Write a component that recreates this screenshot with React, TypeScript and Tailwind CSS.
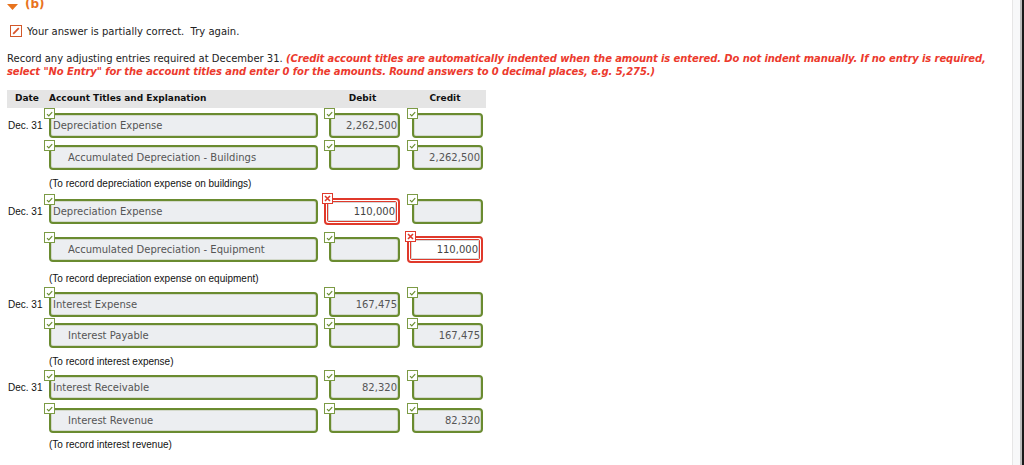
import React from 'react'

type Cell = { value?: string; bad?: boolean }
type Line = { account: string; credit?: boolean; debit: Cell; cr: Cell }
type Entry = { lines: [Line, Line]; note: string; gap: string; noteGap: string; after: string }

const entries: Entry[] = [
  {
    lines: [
      { account: 'Depreciation Expense', debit: { value: '2,262,500' }, cr: {} },
      { account: 'Accumulated Depreciation - Buildings', credit: true, debit: {}, cr: { value: '2,262,500' } },
    ],
    note: '(To record depreciation expense on buildings)',
    gap: 'mt-[7px]',
    noteGap: 'mt-[7px]',
    after: 'mb-[7px]',
  },
  {
    lines: [
      { account: 'Depreciation Expense', debit: { value: '110,000', bad: true }, cr: {} },
      { account: 'Accumulated Depreciation - Equipment', credit: true, debit: {}, cr: { value: '110,000', bad: true } },
    ],
    note: '(To record depreciation expense on equipment)',
    gap: 'mt-[11px]',
    noteGap: 'mt-[9px]',
    after: 'mb-[6px]',
  },
  {
    lines: [
      { account: 'Interest Expense', debit: { value: '167,475' }, cr: {} },
      { account: 'Interest Payable', credit: true, debit: {}, cr: { value: '167,475' } },
    ],
    note: '(To record interest expense)',
    gap: 'mt-[6px]',
    noteGap: 'mt-[7px]',
    after: 'mb-[6px]',
  },
  {
    lines: [
      { account: 'Interest Receivable', debit: { value: '82,320' }, cr: {} },
      { account: 'Interest Revenue', credit: true, debit: {}, cr: { value: '82,320' } },
    ],
    note: '(To record interest revenue)',
    gap: 'mt-[8px]',
    noteGap: 'mt-[5px]',
    after: 'mb-0',
  },
]

function Badge({ bad }: { bad?: boolean }) {
  if (bad) {
    return (
      <span className="absolute -left-[4px] -top-[7px] z-10 flex h-[11px] w-[11px] items-center justify-center border border-[#e0392b] bg-white">
        <svg width="7" height="7" viewBox="0 0 7 7">
          <path d="M1 1 L6 6 M6 1 L1 6" stroke="#e0392b" strokeWidth="1.6" />
        </svg>
      </span>
    )
  }
  return (
    <span className="absolute -left-[7px] -top-[7px] z-10 flex h-[11px] w-[11px] items-center justify-center border border-[#7c9b45] bg-white">
      <svg width="7" height="6" viewBox="0 0 7 6">
        <path d="M1 3.2 L2.8 5 L6.2 1.2" stroke="#6b8e32" strokeWidth="1.2" fill="none" />
      </svg>
    </span>
  )
}

function GreenBox({ children, className }: { children?: React.ReactNode; className: string }) {
  return (
    <div
      className={`relative flex h-[25px] items-center rounded-[4px] border-2 border-[#6a8b30] bg-[#eceef1] text-[#555] shadow-[inset_0_0_0_1px_#d3d9cb] ${className}`}
    >
      <Badge />
      {children}
    </div>
  )
}

function Amount({ cell, col }: { cell: Cell; col: 'debit' | 'credit' }) {
  const margin = col === 'debit' ? 'ml-[11px]' : 'ml-[12px]'
  if (cell.bad) {
    return (
      <div className={`relative h-[27px] w-[76px] rounded-[4px] border-2 border-[#e0392b] bg-white p-px ${col === 'debit' ? 'ml-[6px]' : 'ml-[7px]'}`}>
        <Badge bad />
        <div className="h-full rounded-[2px] border border-[#e0392b]">
          <div className="flex h-full items-center justify-end border border-[#d6d6d6] bg-white text-[#444]">
            {cell.value}
          </div>
        </div>
      </div>
    )
  }
  return (
    <GreenBox className={`${margin} w-[71px] justify-end pr-[1px]`}>
      {cell.value}
    </GreenBox>
  )
}

function Row({ line, date, className }: { line: Line; date?: string; className: string }) {
  return (
    <div className={`flex items-center ${className}`}>
      <div className="w-[42px] pl-px font-['Liberation_Sans',Arial,sans-serif] text-[10px] text-[#111]">{date}</div>
      <GreenBox className={`w-[269px] ${line.credit ? 'pl-[17px]' : 'pl-[2px]'}`}>{line.account}</GreenBox>
      <Amount cell={line.debit} col="debit" />
      <Amount cell={line.cr} col="credit" />
    </div>
  )
}

export default function App() {
  return (
    <div className="flex h-[465px] w-[1024px] overflow-hidden bg-white font-['DejaVu_Sans',Verdana,sans-serif] text-[10px] text-[#222]">
      <div className="flex-1 px-[7px]">
        <div className="-mt-[3px] flex h-[14px] items-start gap-[7px]">
          <svg width="11" height="6" viewBox="0 0 11 6" className="mt-[7px]">
            <path d="M0 0 L11 0 L5.5 6 Z" fill="#e8731d" />
          </svg>
          <span className="text-[12px] font-bold leading-[14px] text-[#e8731d]">(b)</span>
        </div>

        <div className="mt-[14px] flex h-[12px] items-center gap-[5px] pl-[3px]">
          <span className="flex h-[12px] w-[12px] items-center justify-center border border-[#d2572a] bg-white">
            <svg width="8" height="8" viewBox="0 0 8 8">
              <path d="M1.2 6.8 L6.8 1.2" stroke="#d9542b" strokeWidth="1.8" />
            </svg>
          </span>
          <span className="whitespace-pre">Your answer is partially correct.  Try again.</span>
        </div>

        <p className="mt-[15px] whitespace-nowrap leading-[13px]">
          Record any adjusting entries required at December 31.{' '}
          <span className="font-bold italic tracking-[-0.1px] text-[#ec3a2d]">
            (Credit account titles are automatically indented when the amount is entered. Do not indent manually. If no entry is required,
            <br />
            select "No Entry" for the account titles and enter 0 for the amounts. Round answers to 0 decimal places, e.g. 5,275.)
          </span>
        </p>

        <div className="mt-[12px] flex h-[18px] w-[479px] items-center bg-[#e5e5e5] text-[9px] font-bold text-[#111]">
          <div className="w-[42px] pl-[8px]">Date</div>
          <div className="w-[269px]">Account Titles and Explanation</div>
          <div className="ml-[11px] w-[71px] pr-[4px] text-center">Debit</div>
          <div className="ml-[12px] w-[71px] pr-[5px] text-center">Credit</div>
        </div>

        <div className="mt-[5px]">
          {entries.map((entry, i) => (
            <div key={i} className={entry.after}>
              <Row line={entry.lines[0]} date="Dec. 31" className="" />
              <Row line={entry.lines[1]} className={entry.gap} />
              <div className={`${entry.noteGap} pl-[42px] font-['Liberation_Sans',Arial,sans-serif] text-[10px] leading-[14px] text-[#111]`}>
                {entry.note}
              </div>
            </div>
          ))}
        </div>
      </div>

      <div className="flex w-[12px]">
        <div className="flex-1 border-l border-[#e6e6e6] bg-[#f7f8f9]" />
        <div className="w-[2px] bg-[#bdbdbd]" />
        <div className="w-[2px] bg-[#1a1a1a]" />
      </div>
    </div>
  )
}
